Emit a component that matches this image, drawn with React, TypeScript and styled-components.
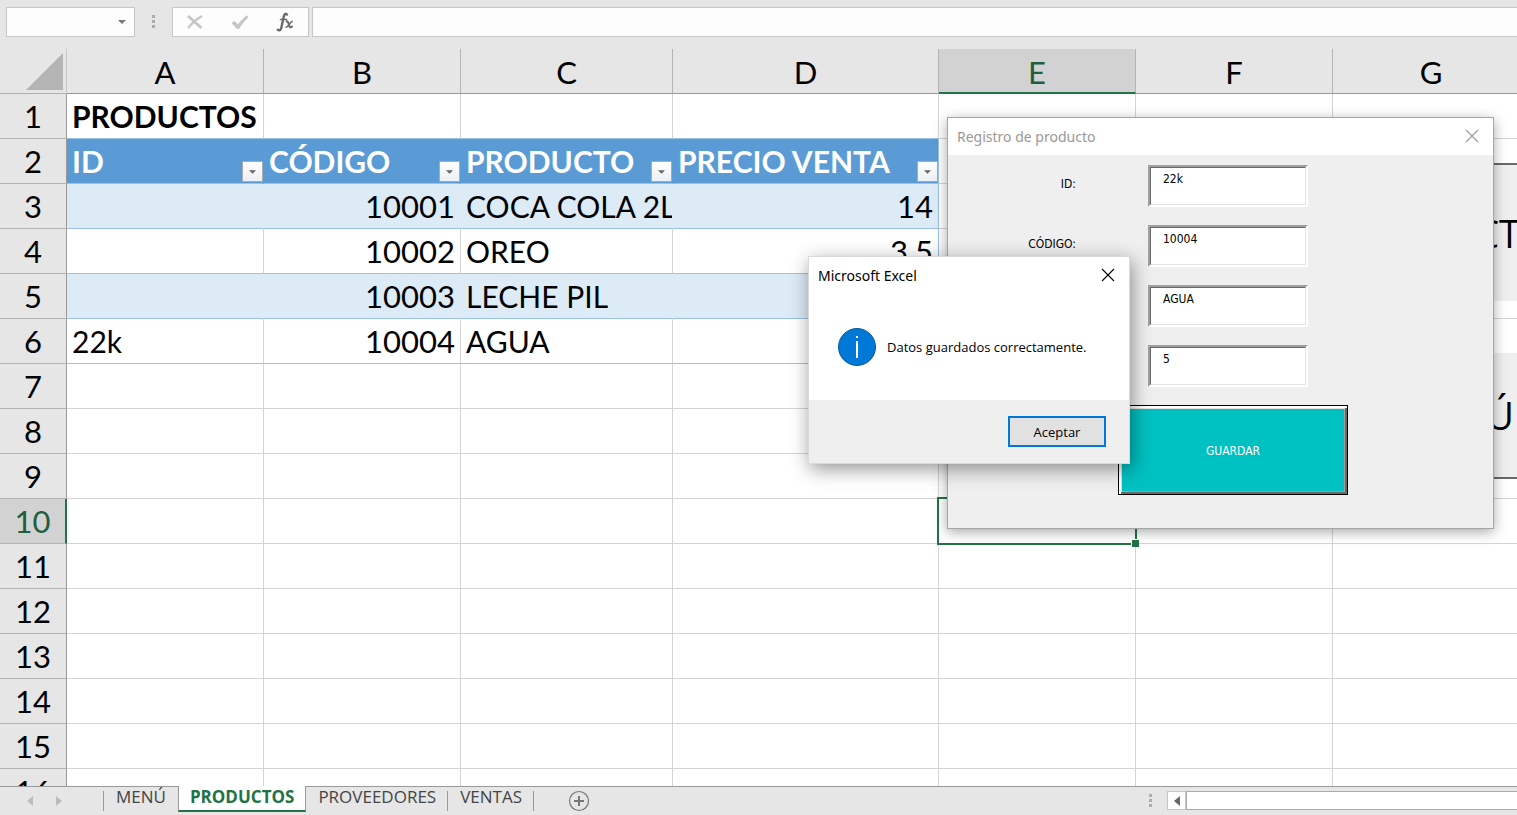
import React from "react";
import styled, { createGlobalStyle, css } from "styled-components";

const sheetFont = `Lato, Carlito, "Liberation Sans", sans-serif`;
const uiFont = `"Open Sans", "Noto Sans", sans-serif`;
const formFont = `"DejaVu Sans Condensed", "DejaVu Sans", sans-serif`;

const GlobalStyle = createGlobalStyle`
  * { box-sizing: border-box; }
  html, body, #root { height: 100%; }
  body { margin: 0; background: #e6e6e6; font-family: ${uiFont}; overflow: hidden; }
  button, input { font: inherit; color: inherit; margin: 0; }
  button { padding: 0; border: 0; background: none; }
`;

const Workbook = styled.main`
  position: relative;
  display: flex;
  flex-direction: column;
  height: 100vh;
  overflow: hidden;
`;

/* Formula bar */

const FormulaBar = styled.header`
  display: flex;
  align-items: flex-start;
  flex: none;
  height: 49px;
  padding: 7px 0 0 6px;
`;

const BarBox = styled.div`
  display: flex;
  align-items: center;
  height: 30px;
  border: 1px solid #c6c6c6;
  background: #fdfdfd;
`;

const NameBox = styled(BarBox)`
  width: 129px;
`;

const BarInput = styled.input`
  flex: 1;
  min-width: 0;
  height: 100%;
  padding: 0 6px;
  border: 0;
  outline: 0;
  background: transparent;
  font-size: 14px;
`;

const DropButton = styled.button`
  display: flex;
  align-items: center;
  justify-content: center;
  width: 24px;
  height: 100%;
`;

const Grip = styled.span`
  display: flex;
  flex-direction: column;
  gap: 2px;
  width: 3px;

  i {
    height: 3px;
    background: #ababab;
  }
`;

const BarGrip = styled(Grip)`
  margin: 8px 17px 0;
`;

const BarTools = styled(BarBox)`
  width: 137px;
  justify-content: space-between;
  padding: 0 13px 0 12px;
`;

const ToolButton = styled.button`
  display: flex;
  width: 20px;
  height: 20px;
`;

const FormulaBox = styled(BarBox)`
  flex: 1;
  margin-left: 3px;
  border-right: 0;
`;

/* Grid */

const SheetArea = styled.section`
  position: relative;
  z-index: 0;
  flex: 1;
  min-height: 0;
  overflow: hidden;
  background: #fff;
`;

const Sheet = styled.table`
  table-layout: fixed;
  border-collapse: separate;
  border-spacing: 0;
  width: 100%;
  min-width: 1530px;
  font-family: ${sheetFont};
  font-size: 31px;
  line-height: 44px;
  color: #000;
`;

const headCell = css`
  padding: 0;
  font-weight: 400;
  text-align: center;
  background: #e6e6e6;
`;

const ColumnHead = styled.th<{ $active?: boolean }>`
  ${headCell}
  height: 45px;
  padding-top: 3px;
  line-height: 41px;
  border-right: 1px solid #b4b4b4;
  border-bottom: 1px solid #999;
  ${(p) =>
    p.$active &&
    css`
      padding-top: 4px;
      background: #d2d2d2;
      color: #1e5f3e;
      border-bottom: 2px solid #217346;
      line-height: 39px;
    `}
`;

const Corner = styled.th`
  ${headCell}
  border-right: 1px solid #c6c6c6;
  border-bottom: 1px solid #b0b0b0;

  svg {
    display: block;
    margin: 3px 3px 2px auto;
  }
`;

const RowHead = styled.th<{ $active?: boolean }>`
  ${headCell}
  height: 45px;
  border-right: 1px solid #999;
  border-bottom: 1px solid #b4b4b4;
  ${(p) =>
    p.$active &&
    css`
      background: #d2d2d2;
      color: #1e5f3e;
      border-right: 2px solid #217346;
    `}
`;

type CellProps = {
  $band?: boolean;
  $blueBottom?: boolean;
  $blueRight?: boolean;
  $number?: boolean;
  $bold?: boolean;
};

const Cell = styled.td<CellProps>`
  height: 45px;
  padding: 0 ${(p) => (p.$number ? 5 : 0)}px 0 5px;
  white-space: nowrap;
  overflow: hidden;
  font-size: ${(p) => (p.$number ? 31 : 30)}px;
  text-align: ${(p) => (p.$number ? "right" : "left")};
  font-weight: ${(p) => (p.$bold ? 700 : 400)};
  background: ${(p) => (p.$band ? "#ddebf7" : "#fff")};
  border-right: 1px solid
    ${(p) => (p.$blueRight ? "#9bc2e6" : p.$band ? "#ddebf7" : "#d4d4d4")};
  border-bottom: 1px solid ${(p) => (p.$blueBottom ? "#9bc2e6" : "#d4d4d4")};
`;

const SelectedCell = styled(Cell)`
  position: relative;
  z-index: 1;
  overflow: visible;

  &::before {
    content: "";
    position: absolute;
    inset: -2px;
    border: 2px solid #217346;
  }

  &::after {
    content: "";
    position: absolute;
    right: -4px;
    bottom: -4px;
    width: 7px;
    height: 7px;
    border: solid #fff;
    border-width: 1px 0 0 1px;
    background: #217346;
  }
`;

const FieldHead = styled.th<{ $last?: boolean }>`
  height: 45px;
  padding: 0 0 0 5px;
  color: #fff;
  font-size: 30px;
  font-weight: 700;
  text-align: left;
  white-space: nowrap;
  background: #5b9bd5;
  border-right: 1px solid ${(p) => (p.$last ? "#9bc2e6" : "#5b9bd5")};
  border-bottom: 1px solid #9bc2e6;

  div {
    display: flex;
    justify-content: space-between;
    align-items: flex-end;
    height: 44px;
  }
`;

const FilterButton = styled.button`
  display: flex;
  align-items: center;
  justify-content: center;
  flex: none;
  width: 21px;
  height: 21px;
  margin-bottom: 1px;
  border: 1px solid #ababab;
  background: linear-gradient(#fff, #eceff4);
`;

const MacroButton = styled.button<{ $edge: "top" | "bottom" }>`
  position: absolute;
  left: 1400px;
  top: ${(p) => (p.$edge === "top" ? 114 : 304)}px;
  width: 130px;
  height: ${(p) => (p.$edge === "top" ? 138 : 126)}px;
  padding-right: ${(p) => (p.$edge === "top" ? 10 : 16)}px;
  text-align: right;
  font-size: 38px;
  background: #efefef;
  border: 0 solid #696969;
  border-${(p) => p.$edge}-width: 2px;
`;

/* Sheet tabs */

const TabBar = styled.footer`
  display: flex;
  flex: none;
  height: 29px;
  border-top: 1px solid #999;
  background: #e6e6e6;
`;

const TabArrows = styled.div`
  display: flex;
  align-items: center;
  gap: 21px;
  width: 103px;
  padding-left: 27px;
`;

const ArrowButton = styled.button`
  display: flex;
  width: 8px;
  height: 10px;
`;

const TabList = styled.nav`
  display: flex;
  height: 25px;
  font-size: 17px;
  line-height: 20px;
  color: #444;
`;

const Tab = styled.button<{ $active?: boolean; $before?: boolean }>`
  display: flex;
  padding: 0 12px;
  position: relative;

  &::after {
    content: "";
    position: absolute;
    right: 0;
    top: 4px;
    width: 1px;
    height: 20px;
    background: ${(p) => (p.$before ? "transparent" : "#999")};
  }

  ${(p) =>
    p.$active &&
    css`
      margin-top: -1px;
      height: 26px;
      padding: 1px 11px 0;
      border: solid #999;
      border-width: 0 1px;
      border-bottom: 2px solid #217346;
      background: #fff;
      color: #217346;
      font-weight: 700;

      &::after {
        display: none;
      }
    `}
`;

const TabStart = styled.span`
  width: 1px;
  height: 20px;
  margin-top: 4px;
  background: #999;
`;

const AddSheet = styled.button`
  display: flex;
  width: 22px;
  height: 22px;
  margin: 3px 0 0 34px;
`;

const ScrollZone = styled.div`
  display: flex;
  flex: 1;
  max-width: 368px;
  margin-left: auto;
  padding-top: 4px;
`;

const ScrollGrip = styled(Grip)`
  margin: 3px 15px 0 0;
`;

const ScrollButton = styled.button`
  display: flex;
  align-items: center;
  justify-content: center;
  width: 19px;
  height: 19px;
  border: 1px solid #c6c6c6;
  background: #fff;
`;

const ScrollThumb = styled.div`
  flex: 1;
  height: 19px;
  border: 1px solid #ababab;
  border-right: 0;
  background: #fff;
`;

/* Windows over the sheet */

const FormWindow = styled.section`
  position: absolute;
  left: 947px;
  top: 117px;
  width: 547px;
  height: 412px;
  border: 1px solid #a6a6a6;
  background: #efefef;
  box-shadow: 0 3px 12px rgba(0, 0, 0, 0.34);
`;

const TitleBar = styled.header<{ $muted?: boolean }>`
  display: flex;
  align-items: center;
  justify-content: space-between;
  height: 37px;
  padding: 0 14px 0 9px;
  background: #fff;
  color: ${(p) => (p.$muted ? "#999" : "#000")};
  font-family: "Noto Sans", "Open Sans", sans-serif;
  font-size: 14px;
  line-height: 20px;

  h2 {
    margin: 0;
    font: inherit;
  }
`;

const CloseButton = styled.button`
  display: flex;
  width: 14px;
  height: 14px;
  margin-bottom: 2px;
`;

const ProductForm = styled.form`
  display: flex;
  flex-direction: column;
  gap: 18px;
  padding-top: 10px;
  font-family: ${formFont};
  font-size: 12px;
  line-height: 16px;
`;

const FormRow = styled.div`
  display: flex;
`;

const FieldLabel = styled.label`
  width: 128px;
  margin-right: 72px;
  padding-top: 11px;
  text-align: right;
`;

const SunkenBox = styled.div`
  width: 160px;
  height: 42px;
  border: 2px solid;
  border-color: #a0a0a0 #fff #fff #a0a0a0;
  background: #fff;
`;

const FormInput = styled.input`
  display: block;
  width: 100%;
  height: 100%;
  padding: 0 12px 14px;
  border: 1px solid;
  border-color: #696969 #e3e3e3 #e3e3e3 #696969;
  outline: 0;
  background: #fff;
`;

const SaveButton = styled.button`
  width: 230px;
  height: 90px;
  margin-left: 170px;
  padding-top: 2px;
  border: 1px solid #000;
  background: #00c1c1;
  color: #fff;
  box-shadow: inset 2px 2px #fff, inset -2px -2px #696969, inset 3px 3px #e3e3e3,
    inset -3px -3px #a0a0a0;
`;

const MessageWindow = styled.section`
  position: absolute;
  left: 808px;
  top: 256px;
  width: 322px;
  height: 208px;
  display: flex;
  flex-direction: column;
  border: 1px solid #dadada;
  background: #fff;
  box-shadow: 2px 5px 18px rgba(0, 0, 0, 0.42);
`;

const MessageBody = styled.div`
  display: flex;
  align-items: center;
  flex: 1;
  gap: 11px;
  padding: 0 29px;
  font-size: 13px;
  line-height: 20px;

  p {
    margin: 0;
    white-space: nowrap;
  }
`;

const MessageFooter = styled.footer`
  display: flex;
  justify-content: flex-end;
  height: 63px;
  padding: 16px 23px;
  background: #efefef;
`;

const AcceptButton = styled.button`
  width: 98px;
  height: 31px;
  border: 2px solid #0078d7;
  background: #e1e1e1;
  font-size: 13px;
`;

const CloseIcon = () => (
  <svg width="14" height="14" viewBox="0 0 14 14" fill="none" stroke="currentColor" strokeWidth="1.1">
    <path d="M1 1L13 13M13 1L1 13" />
  </svg>
);

const DownArrow = ({ w = 7, fill = "#666" }: { w?: number; fill?: string }) => (
  <svg width={w} height="4" viewBox="0 0 8 4">
    <path d="M0 0H8L4 4Z" fill={fill} />
  </svg>
);

const SideArrow = ({ flip, fill = "#bcbcbc" }: { flip?: boolean; fill?: string }) => (
  <svg width="6" height="10" viewBox="0 0 6 10">
    <path d={flip ? "M0 0V10L6 5Z" : "M6 0V10L0 5Z"} fill={fill} />
  </svg>
);

const Dots = () => (
  <>
    <i />
    <i />
    <i />
  </>
);

const columns = [
  { name: "A", width: 197 },
  { name: "B", width: 197 },
  { name: "C", width: 212 },
  { name: "D", width: 266 },
  { name: "E", width: 197 },
  { name: "F", width: 197 },
  { name: "G", width: 197 },
];

const fields = ["ID", "CÓDIGO", "PRODUCTO", "PRECIO VENTA"];

const products: Record<number, string[]> = {
  3: ["", "10001", "COCA COLA 2L", "14"],
  4: ["", "10002", "OREO", "3,5"],
  5: ["", "10003", "LECHE PIL", ""],
  6: ["22k", "10004", "AGUA", ""],
};

const formFields = [
  { id: "id", label: "ID:", name: "ID", value: "22k" },
  { id: "codigo", label: "CÓDIGO:", name: "Código", value: "10004" },
  { id: "producto", name: "Producto", value: "AGUA" },
  { id: "precio", name: "Precio venta", value: "5" },
];

const rows = Array.from({ length: 16 }, (_, i) => i + 1);

function SheetCell({ row, col }: { row: number; col: number }) {
  if (row === 2 && col < 4) {
    return (
      <FieldHead $last={col === 3} scope="col">
        <div>
          {fields[col]}
          <FilterButton type="button" aria-label={`Filtrar ${fields[col]}`}>
            <DownArrow />
          </FilterButton>
        </div>
      </FieldHead>
    );
  }
  if (row === 10 && col === 4) return <SelectedCell />;
  const inTable = row >= 3 && row <= 6 && col < 4;
  return (
    <Cell
      $bold={row === 1}
      $band={inTable && row % 2 === 1}
      $blueBottom={col < 4 && (inTable || row === 1)}
      $blueRight={inTable && col === 3}
      $number={inTable && col % 2 === 1}
    >
      {row === 1 && col === 0 ? "PRODUCTOS" : inTable ? products[row][col] : null}
    </Cell>
  );
}

export default function App() {
  return (
    <Workbook>
      <GlobalStyle />
      <FormulaBar>
        <NameBox>
          <BarInput aria-label="Cuadro de nombres" />
          <DropButton type="button" aria-label="Mostrar nombres">
            <DownArrow w={8} fill="#777" />
          </DropButton>
        </NameBox>
        <BarGrip>
          <Dots />
        </BarGrip>
        <BarTools>
          <ToolButton type="button" aria-label="Cancelar">
            <svg width="20" height="20" viewBox="0 0 20 20" fill="none" stroke="#c6c6c6">
              <path d="M3 4L16.500 16" strokeWidth="2.800" />
              <path d="M17 4C12 7 7 11 3 16" strokeWidth="2.200" />
            </svg>
          </ToolButton>
          <ToolButton type="button" aria-label="Introducir">
            <svg width="20" height="20" viewBox="0 0 20 20" fill="#c6c6c6">
              <path d="M1.500 11L4.500 9L7.800 12.300C11 8.500 14 5.500 17 3.300L18.300 5.500C15 8.500 12 12 9 17H7Z" />
            </svg>
          </ToolButton>
          <ToolButton type="button" aria-label="Insertar función">
            <svg width="20" height="20" viewBox="0 0 20 20" fill="none" stroke="#6a6a6a" strokeLinecap="round">
              <path d="M12 2.500C10.500 .8 9.300 2.500 8.700 5L6.500 15C6 18 4.500 19 2.800 17.800" strokeWidth="2.400" />
              <path d="M5.500 7.500H11.500" strokeWidth="1.600" />
              <path d="M11.500 9.500C13 8.500 13.300 11 14 13C14.500 15.500 15.500 16 17 14.500" strokeWidth="2" />
              <path d="M17.300 9.500C15.500 9 13 15.500 11 15.300" strokeWidth="1.500" />
            </svg>
          </ToolButton>
        </BarTools>
        <FormulaBox>
          <BarInput aria-label="Barra de fórmulas" />
        </FormulaBox>
      </FormulaBar>

      <SheetArea>
        <Sheet>
          <colgroup>
            <col style={{ width: 67 }} />
            {columns.map((c) => (
              <col key={c.name} style={{ width: c.width }} />
            ))}
            <col />
          </colgroup>
          <thead>
            <tr>
              <Corner>
                <svg width="37" height="37" viewBox="0 0 37 37">
                  <path d="M37 0V37H0Z" fill="#b4b4b4" />
                </svg>
              </Corner>
              {columns.map((c) => (
                <ColumnHead key={c.name} $active={c.name === "E"} scope="col">
                  {c.name}
                </ColumnHead>
              ))}
            </tr>
          </thead>
          <tbody>
            {rows.map((row) => (
              <tr key={row}>
                <RowHead $active={row === 10} scope="row">
                  {row}
                </RowHead>
                {columns.map((c, col) => (
                  <SheetCell key={c.name} row={row} col={col} />
                ))}
              </tr>
            ))}
          </tbody>
        </Sheet>
        <MacroButton $edge="top" type="button">
          CT
        </MacroButton>
        <MacroButton $edge="bottom" type="button">
          Ú
        </MacroButton>
      </SheetArea>

      <TabBar>
        <TabArrows>
          <ArrowButton type="button" aria-label="Hoja anterior">
            <SideArrow />
          </ArrowButton>
          <ArrowButton type="button" aria-label="Hoja siguiente">
            <SideArrow flip />
          </ArrowButton>
        </TabArrows>
        <TabStart />
        <TabList>
          <Tab type="button" $before>
            MENÚ
          </Tab>
          <Tab type="button" $active>
            PRODUCTOS
          </Tab>
          <Tab type="button">PROVEEDORES</Tab>
          <Tab type="button">VENTAS</Tab>
        </TabList>
        <AddSheet type="button" aria-label="Hoja nueva">
          <svg width="22" height="22" viewBox="0 0 22 22" fill="none" stroke="#777">
            <circle cx="11" cy="11" r="9.500" strokeWidth="1.200" />
            <path d="M11 6V16M6 11H16" strokeWidth="2" />
          </svg>
        </AddSheet>
        <ScrollZone>
          <ScrollGrip>
            <Dots />
          </ScrollGrip>
          <ScrollButton type="button" aria-label="Desplazar a la izquierda">
            <SideArrow fill="#666" />
          </ScrollButton>
          <ScrollThumb />
        </ScrollZone>
      </TabBar>

      <FormWindow>
        <TitleBar $muted>
          <h2>Registro de producto</h2>
          <CloseButton type="button" aria-label="Cerrar formulario">
            <CloseIcon />
          </CloseButton>
        </TitleBar>
        <ProductForm>
          {formFields.map((f) => (
            <FormRow key={f.id}>
              <FieldLabel htmlFor={f.id}>{f.label}</FieldLabel>
              <SunkenBox>
                <FormInput id={f.id} aria-label={f.name} defaultValue={f.value} />
              </SunkenBox>
            </FormRow>
          ))}
          <SaveButton type="button">GUARDAR</SaveButton>
        </ProductForm>
      </FormWindow>

      <MessageWindow role="dialog" aria-label="Microsoft Excel">
        <TitleBar>
          <h2>Microsoft Excel</h2>
          <CloseButton type="button" aria-label="Cerrar">
            <CloseIcon />
          </CloseButton>
        </TitleBar>
        <MessageBody>
          <svg width="38" height="38" viewBox="0 0 38 38">
            <circle cx="19" cy="19" r="18.500" fill="#0078d7" stroke="#0a5a9c" />
            <path d="M19 8V10M19 13V30" stroke="#fff" strokeWidth="2" />
          </svg>
          <p>Datos guardados correctamente.</p>
        </MessageBody>
        <MessageFooter>
          <AcceptButton type="button">Aceptar</AcceptButton>
        </MessageFooter>
      </MessageWindow>
    </Workbook>
  );
}
